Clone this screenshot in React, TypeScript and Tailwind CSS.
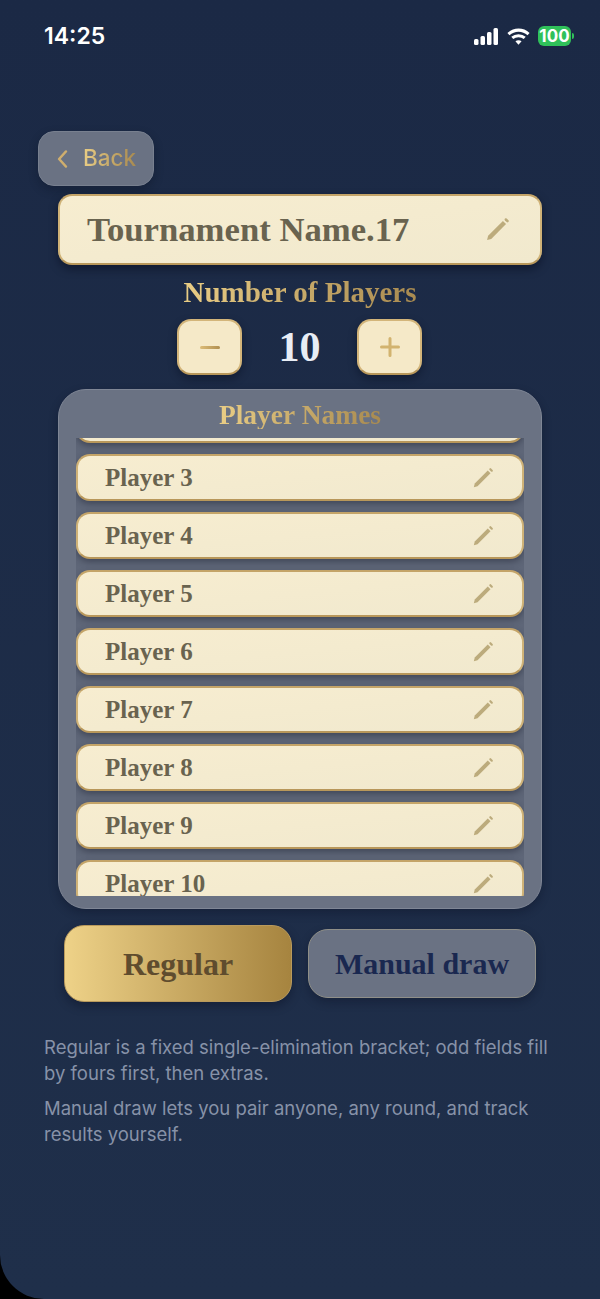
import React from "react";

const serif = "font-['Liberation_Serif',serif] font-bold";
const goldText = "bg-gradient-to-r from-[#e9cd85] to-[#a88a50] bg-clip-text text-transparent";
const creamBox = "border-2 border-[#cfb277] border-b-[#b8975a] border-t-[#c4a468] bg-gradient-to-br from-[#f7edd0] to-[#f1e9ce]";

function Pencil({ className }: { className: string }) {
  return (
    <svg viewBox="0 0 24 24" className={className} fill="none">
      <path d="M2 22 L3 18 L17.2 3.8 L20.2 6.8 L6 21 Z" fill="currentColor" />
      <path d="M20 2.4 L21.6 4" stroke="currentColor" strokeWidth="2.4" strokeLinecap="round" />
    </svg>
  );
}

function PlayerRow({ name }: { name: string }) {
  return (
    <div className={`flex h-[47px] shrink-0 items-center justify-between rounded-[14px] ${creamBox} pl-[27px] pr-[28px] shadow-[0_3px_6px_rgba(30,35,50,0.45)]`}>
      <span className={`${serif} text-[25px] leading-none text-[#69634f]`}>{name}</span>
      <Pencil className="h-[22px] w-[22px] text-[#bcab7c]" />
    </div>
  );
}

export default function App() {
  const players = [2, 3, 4, 5, 6, 7, 8, 9, 10];

  return (
    <div className="h-[1299px] w-[600px] overflow-hidden bg-black">
      <div className="flex h-full w-full flex-col rounded-bl-[44px] bg-gradient-to-b from-[#1b2945] to-[#1f2f4a]">
        {/* Status bar */}
        <div className="flex h-[72px] items-center justify-between pl-[44px] pr-[26px]">
          <span className="font-['Inter',sans-serif] text-[23px] font-semibold leading-none text-white">14:25</span>
          <div className="flex items-center gap-[8px]">
            <svg viewBox="0 0 24 17" className="h-[17px] w-[26px]" fill="white">
              <rect x="0" y="11" width="4.5" height="6" rx="1.5" />
              <rect x="6.5" y="8" width="4.5" height="9" rx="1.5" />
              <rect x="13" y="4" width="4.5" height="13" rx="1.5" />
              <rect x="19.5" y="0" width="4.5" height="17" rx="1.5" />
            </svg>
            <svg viewBox="0 0 24 18" className="h-[19px] w-[23px]" fill="none" stroke="white" strokeWidth="3.2">
              <path d="M1.5 6.5 C7.5 1 16.5 1 22.5 6.5" />
              <path d="M5.5 10.5 C9 7.5 15 7.5 18.5 10.5" />
              <path d="M12 17.5 L8.8 14 C10.5 12.6 13.5 12.6 15.2 14 Z" fill="white" stroke="none" />
            </svg>
            <div className="flex items-center">
              <div className="flex h-[20px] w-[33px] items-center justify-center rounded-[6px] bg-[#30c15a] font-['Inter',sans-serif] text-[17px] font-bold leading-none text-white">
                100
              </div>
              <div className="ml-px h-[6px] w-[2px] rounded-r-sm bg-[#30c15a]" />
            </div>
          </div>
        </div>

        {/* Back */}
        <div className="mt-[59px] pl-[38px]">
          <button className="flex h-[55px] w-[116px] items-center gap-[15px] rounded-[16px] border border-[#78808f] bg-[#6a7283] pl-[18px] shadow-[0_4px_10px_rgba(10,15,30,0.3)]">
            <svg viewBox="0 0 14 24" className="h-[18px] w-[11px]" fill="none" stroke="#cfae6e" strokeWidth="3.4" strokeLinecap="round" strokeLinejoin="round">
              <path d="M11.5 2 L2.5 12 L11.5 22" />
            </svg>
            <span className={`font-['Inter',sans-serif] text-[22.5px] font-medium leading-none ${goldText}`}>Back</span>
          </button>
        </div>

        {/* Tournament name */}
        <div className={`mx-[58px] mt-[8px] flex h-[71px] items-center justify-between rounded-[14px] ${creamBox} pl-[27px] pr-[30px] shadow-[0_4px_8px_rgba(5,10,25,0.5)]`}>
          <span className={`${serif} pt-[1px] text-[34.7px] leading-none text-[#69634f]`}>Tournament Name.17</span>
          <Pencil className="h-[25px] w-[25px] text-[#bcab7c]" />
        </div>

        {/* Player count */}
        <div className={`mt-[12px] text-center ${serif} text-[29px] leading-[30px]`}>
          <span className={goldText}>Number of Players</span>
        </div>
        <div className="mt-[12px] flex items-center justify-center pr-[1px]">
          <button className="flex h-[56px] w-[65px] items-center justify-center rounded-[14px] border-2 border-[#d3b57a] border-b-[#b8975a] bg-[#f5e9c8] shadow-[0_4px_8px_rgba(5,10,25,0.4)]">
            <span className="h-[3px] w-[20px] rounded-full bg-gradient-to-r from-[#dcbc78] to-[#b08f50]" />
          </button>
          <span className={`w-[115px] text-center ${serif} text-[42px] leading-none text-[#e8edf5]`}>10</span>
          <button className="flex h-[56px] w-[65px] items-center justify-center rounded-[14px] border-2 border-[#d3b57a] border-b-[#b8975a] bg-[#f5e9c8] shadow-[0_4px_8px_rgba(5,10,25,0.4)]">
            <svg viewBox="0 0 20 20" className="h-[20px] w-[20px]" fill="none" stroke="#d2b36f" strokeWidth="3" strokeLinecap="round">
              <path d="M10 1.5 V18.5 M1.5 10 H18.5" />
            </svg>
          </button>
        </div>

        {/* Player names panel */}
        <div className="mx-[58px] mt-[14px] h-[520px] rounded-[28px] border border-[#7f8695] bg-[#6a7283] px-[17px] shadow-[0_4px_10px_rgba(5,10,25,0.3)]">
          <div className={`flex h-[48px] items-center justify-center pt-[2px] ${serif} text-[27.5px] leading-none`}>
            <span className={goldText}>Player Names</span>
          </div>
          <div className="h-[458px] overflow-hidden bg-[#5e6678]">
            <div className="-mt-[42px] flex flex-col gap-[11px]">
              {players.map((n) => (
                <PlayerRow key={n} name={`Player ${n}`} />
              ))}
            </div>
          </div>
        </div>

        {/* Mode buttons */}
        <div className="mx-[64px] mt-[16px] flex items-center justify-between">
          <button className={`h-[77px] w-[228px] rounded-[20px] border border-[#b99a5c] bg-gradient-to-r from-[#eed288] to-[#a6843f] ${serif} text-[32px] leading-none text-[#5f4c2e] shadow-[0_4px_10px_rgba(5,10,25,0.35)]`}>
            Regular
          </button>
          <button className={`h-[69px] w-[228px] rounded-[20px] border border-[#8f8f88] bg-[#6a7283] ${serif} text-[30px] leading-none text-[#1a2850] shadow-[0_4px_10px_rgba(5,10,25,0.3)]`}>
            Manual draw
          </button>
        </div>

        {/* Help text */}
        <div className="mt-[32px] flex flex-col gap-[9px] px-[44px] font-['Inter',sans-serif] text-[18.5px] leading-[26px] text-[#8792a8]">
          <p>Regular is a fixed single-elimination bracket; odd fields fill by fours first, then extras.</p>
          <p>Manual draw lets you pair anyone, any round, and track results yourself.</p>
        </div>
      </div>
    </div>
  );
}
